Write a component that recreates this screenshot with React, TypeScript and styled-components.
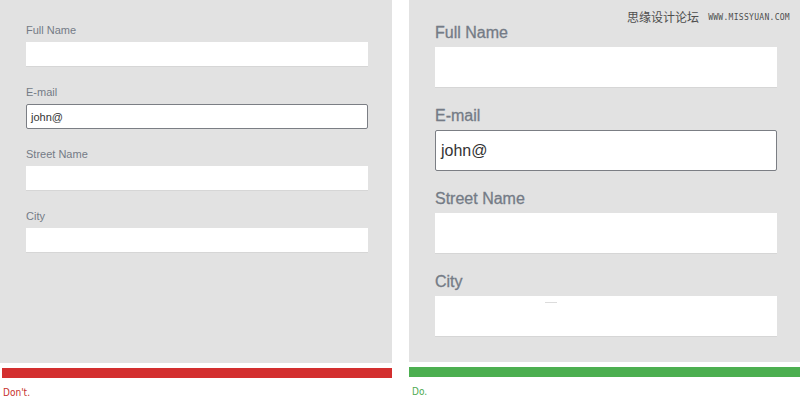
import React from 'react';
import styled, { createGlobalStyle } from 'styled-components';

const GlobalStyle = createGlobalStyle`
  html, body {
    margin: 0;
    padding: 0;
    background: #ffffff;
    font-family: 'Liberation Sans', Arial, sans-serif;
  }
`;

type Size = 'small' | 'large';

const fields = ['Full Name', 'E-mail', 'Street Name', 'City'];

const Page = styled.div`
  width: 800px;
  height: 414px;
  display: grid;
  grid-template-columns: 392px 391px;
  column-gap: 17px;
  overflow: hidden;
`;

const Column = styled.div`
  display: flex;
  flex-direction: column;
  position: relative;
`;

const Panel = styled.div<{ size: Size }>`
  background: #e2e2e2;
  height: ${(p) => (p.size === 'small' ? '363px' : '362px')};
  box-sizing: border-box;
  padding: ${(p) => (p.size === 'small' ? '23px 24px 0 26px' : '23px 23px 0 26px')};
  display: flex;
  flex-direction: column;
  gap: 18px;
`;

const Field = styled.div`
  display: flex;
  flex-direction: column;
`;

const Label = styled.label<{ size: Size }>`
  color: #747b86;
  font-size: ${(p) => (p.size === 'small' ? '11px' : '16px')};
  line-height: ${(p) => (p.size === 'small' ? '14px' : '20px')};
  margin-bottom: ${(p) => (p.size === 'small' ? '5px' : '4px')};
  -webkit-text-stroke: ${(p) => (p.size === 'small' ? '0' : '0.3px')};
`;

const Input = styled.div<{ size: Size; focused?: boolean }>`
  height: ${(p) => (p.size === 'small' ? '25px' : '41px')};
  box-sizing: border-box;
  background: #ffffff;
  border-bottom: 1px solid #d6d6d6;
  display: flex;
  align-items: center;
  padding-left: ${(p) => (p.size === 'small' ? '4px' : '5px')};
  color: #333333;
  font-size: ${(p) => (p.size === 'small' ? '11px' : '16px')};
  position: relative;
  ${(p) =>
    p.focused &&
    `
    border: 1px solid #7b7e84;
    border-radius: 2px;
  `}
`;

const Dash = styled.span`
  position: absolute;
  left: 110px;
  top: 6px;
  width: 12px;
  height: 1px;
  background: #dcdcdc;
`;

const Bar = styled.div<{ tone: 'red' | 'green' }>`
  height: 10px;
  margin-top: 5px;
  margin-left: ${(p) => (p.tone === 'red' ? '2px' : '0')};
  background: ${(p) => (p.tone === 'red' ? '#d32f2f' : '#4caf50')};
`;

const Caption = styled.div<{ tone: 'red' | 'green' }>`
  margin-top: 8px;
  margin-left: 3px;
  font-family: 'DejaVu Sans Condensed', 'Liberation Sans Narrow', sans-serif;
  font-size: 10px;
  line-height: 13px;
  color: ${(p) => (p.tone === 'red' ? '#c62f2b' : '#4caa50')};
`;

const Watermark = styled.div`
  position: absolute;
  top: 9px;
  right: 10px;
  display: flex;
  align-items: center;
  gap: 9px;
  color: #4e4e4e;
`;

const WatermarkCn = styled.span`
  font-family: 'Noto Sans CJK SC', sans-serif;
  font-size: 12px;
  line-height: 16px;
`;

const WatermarkUrl = styled.span`
  font-family: 'DejaVu Sans Mono', monospace;
  font-size: 8px;
  letter-spacing: 0.3px;
`;

const Form: React.FC<{ size: Size }> = ({ size }) => (
  <Panel size={size}>
    {fields.map((f) => (
      <Field key={f}>
        <Label size={size}>{f}</Label>
        <Input size={size} focused={f === 'E-mail'}>
          {f === 'E-mail' ? 'john@' : ''}
          {size === 'large' && f === 'City' && <Dash />}
        </Input>
      </Field>
    ))}
  </Panel>
);

const App: React.FC = () => (
  <>
    <GlobalStyle />
    <Page>
      <Column>
        <Form size="small" />
        <Bar tone="red" />
        <Caption tone="red">Don't.</Caption>
      </Column>
      <Column>
        <Form size="large" />
        <Bar tone="green" />
        <Caption tone="green">Do.</Caption>
        <Watermark>
          <WatermarkCn>思缘设计论坛</WatermarkCn>
          <WatermarkUrl>WWW.MISSYUAN.COM</WatermarkUrl>
        </Watermark>
      </Column>
    </Page>
  </>
);

export default App;
